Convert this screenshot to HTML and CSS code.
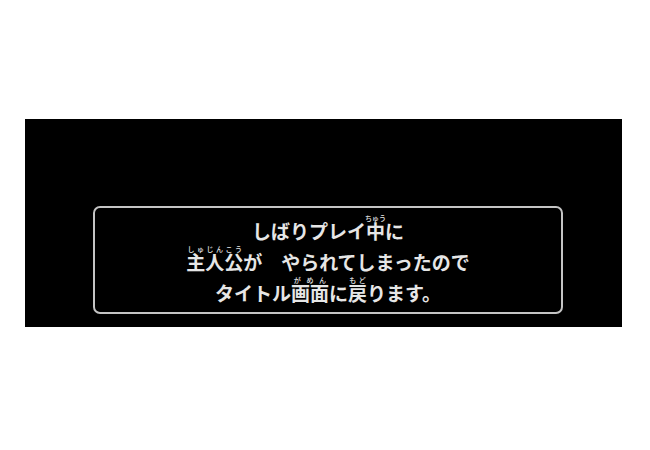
FILE: index.html
```html
<!DOCTYPE html>
<html lang="ja">
<head>
  <meta charset="UTF-8">
  <meta name="viewport" content="width=device-width, initial-scale=1.0">
  <title>しばりプレイ</title>
  <link rel="stylesheet" href="styles.css">
</head>
<body>
  <div class="stage">
    <div class="dialog">
      <p class="line">しばりプレイ<ruby>中<rt>ちゅう</rt></ruby>に</p>
      <p class="line"><ruby>主人公<rt>しゅじんこう</rt></ruby>が　やられてしまったので</p>
      <p class="line">タイトル<ruby>画面<rt>がめん</rt></ruby>に<ruby>戻<rt>もど</rt></ruby>ります。</p>
    </div>
  </div>
</body>
</html>
```

FILE: styles.css
```css
body {
  margin: 0;
  padding: 0;
  background: #fff;
  font-family: "Noto Sans CJK JP", "Noto Sans", sans-serif;
}
.stage {
  width: 597px;
  height: 208px;
  margin: 119px 0 0 25px;
  padding: 87px 0 0 68px;
  box-sizing: border-box;
  background: #000;
}
.dialog {
  width: 470px;
  height: 108px;
  box-sizing: border-box;
  border: 2px solid #c4c4c4;
  border-radius: 7px;
  padding-top: 6px;
  text-align: center;
  color: #e6e6e6;
}
.line {
  margin: 0;
  font-size: 19px;
  font-weight: 700;
  line-height: 29px;
}
rt {
  font-size: 7px;
  line-height: 6px;
  font-weight: 500;
}
```
